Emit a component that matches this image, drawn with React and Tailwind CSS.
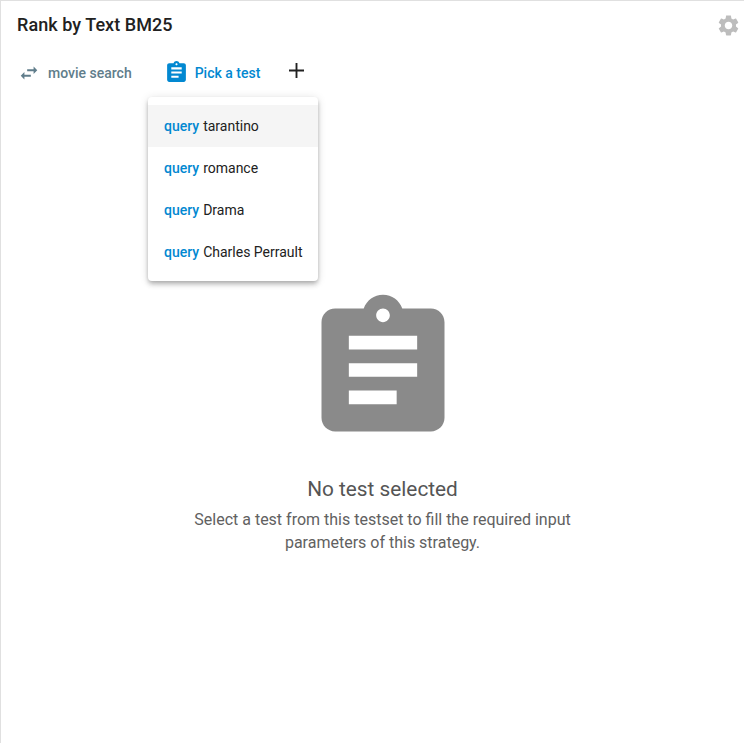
import { useState } from "react";

const ASSIGNMENT =
  "M19 3h-4.18C14.4 1.84 13.3 1 12 1c-1.3 0-2.4.84-2.82 2H5c-1.1 0-2 .9-2 2v14c0 1.1.9 2 2 2h14c1.1 0 2-.9 2-2V5c0-1.1-.9-2-2-2zm-7 0c.55 0 1 .45 1 1s-.45 1-1 1-1-.45-1-1 .45-1 1-1zm2 14H7v-2h7v2zm3-4H7v-2h10v2zm0-4H7V7h10v2z";
const SWAP = "M6.99 11L3 15l3.99 4v-3H14v-2H6.99v-3zM21 9l-3.99-4v3H10v2h7.01v3L21 9z";
const GEAR =
  "M19.14 12.94c.04-.3.06-.61.06-.94 0-.32-.02-.64-.07-.94l2.03-1.58c.18-.14.23-.41.12-.61l-1.92-3.32c-.12-.22-.37-.29-.59-.22l-2.39.96c-.5-.38-1.03-.7-1.62-.94l-.36-2.54c-.04-.24-.24-.41-.48-.41h-3.84c-.24 0-.43.17-.47.41l-.36 2.54c-.59.24-1.13.57-1.62.94l-2.39-.96c-.22-.08-.47 0-.59.22L2.74 8.87c-.12.21-.08.47.12.61l2.03 1.58c-.05.3-.09.63-.09.94s.02.64.07.94l-2.03 1.58c-.18.14-.23.41-.12.61l1.92 3.32c.12.22.37.29.59.22l2.39-.96c.5.38 1.03.7 1.62.94l.36 2.54c.05.24.24.41.48.41h3.84c.24 0 .44-.17.47-.41l.36-2.54c.59-.24 1.13-.56 1.62-.94l2.39.96c.22.08.47 0 .59-.22l1.92-3.32c.12-.22.07-.47-.12-.61l-2.01-1.58zM12 15.6c-1.98 0-3.6-1.62-3.6-3.6s1.62-3.6 3.6-3.6 3.6 1.62 3.6 3.6-1.62 3.6-3.6 3.6z";

const tests = ["tarantino", "romance", "Drama", "Charles Perrault"];

function Icon({ d, className }) {
  return (
    <svg viewBox="0 0 24 24" fill="currentColor" className={className}>
      <path d={d} />
    </svg>
  );
}

export default function App() {
  const [hovered] = useState(0);

  return (
    <div className="h-[743px] w-[744px] overflow-hidden border-l border-t border-[#e0e0e0] bg-white font-['Roboto',sans-serif]">
      <div className="flex items-center justify-between pl-4 pr-[3px] pt-[12px]">
        <h1 className="-mt-[1px] text-lg leading-6 font-medium tracking-[0.05px] text-[#212121]">Rank by Text BM25</h1>
        <Icon d={GEAR} className="size-[25px] text-[#bdbdbd]" />
      </div>

      <div className="relative mt-[14px] flex h-[48px] items-start pl-[17px]">
        <button className="mt-[9px] flex h-[24px] items-center gap-[8px] text-sm font-medium text-[#607d8b]">
          <Icon d={SWAP} className="size-[22px]" />
          movie search
        </button>
        <button className="mt-[8px] ml-[32px] flex items-center gap-[6px] text-sm font-medium text-[#0288d1]">
          <Icon d={ASSIGNMENT} className="size-[25px]" />
          Pick a test
        </button>
        <span className="ml-[29px] mt-[8px] text-[#212121]">
          <svg viewBox="0 0 16 16" className="mt-[3px] size-[15px]" fill="currentColor">
            <path d="M7 0h2v7h7v2H9v7H7V9H0V7h7z" />
          </svg>
        </span>

        <ul className="absolute left-[147px] top-[45px] z-10 w-[170px] rounded-[4px] bg-white py-2 shadow-[0_2px_4px_-1px_rgba(0,0,0,0.2),0_4px_5px_0_rgba(0,0,0,0.14),0_1px_10px_0_rgba(0,0,0,0.12)]">
          {tests.map((t, i) => (
            <li
              key={t}
              className={`flex h-[42px] items-center pl-4 text-sm whitespace-nowrap text-[#212121] ${i === hovered ? "bg-[#f5f5f5]" : ""}`}
            >
              <span className="mr-1 font-medium text-[#0288d1]">query</span>
              {t}
            </li>
          ))}
        </ul>
      </div>

      <div className="mt-[188px] flex flex-col items-center pl-[20px] pr-0 text-center">
        <Icon d={ASSIGNMENT} className="size-[164px] text-[#8a8a8a]" />
        <h2 className="mt-[23px] text-[20.8px] leading-7 text-[#555555]">No test selected</h2>
        <p className="mt-[5px] w-[400px] text-base leading-[23px] text-[#616161]">
          Select a test from this testset to fill the required input parameters of this strategy.
        </p>
      </div>
    </div>
  );
}
